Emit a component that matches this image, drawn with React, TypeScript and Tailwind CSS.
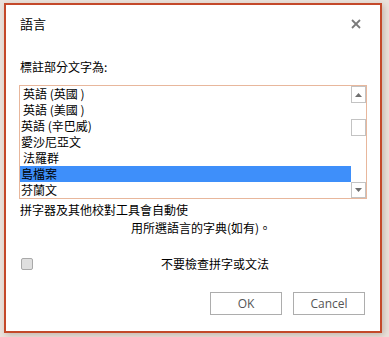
import React from "react";

const cjk = "font-['Noto_Sans_CJK_TC','Noto_Sans_CJK_SC',sans-serif]";

const items = [
  { label: "英語 (英國 )", indent: true },
  { label: "英語 (美國 )", indent: true },
  { label: "英語 (辛巴威)", indent: false },
  { label: "愛沙尼亞文", indent: false },
  { label: "法羅群", indent: true },
  { label: "島檔案", indent: false, selected: true },
  { label: "芬蘭文", indent: false },
];

export default function App() {
  return (
    <div className="w-[389px] h-[337px] bg-[#ebe2dc] pt-[3px] pl-[4px] overflow-hidden">
      <div
        className={`w-[378px] h-[330px] border-2 border-[#c4492a] bg-white flex flex-col pl-[13px] pr-[15px] text-black ${cjk} shadow-[2px_2px_6px_rgba(160,140,130,0.5)]`}
      >
        {/* Title bar */}
        <div className="flex items-center justify-between pt-[9px] h-[29px]">
          <span className="text-[13px] leading-[20px] pl-px">語言</span>
          <svg width="10" height="10" viewBox="0 0 10 10" className="mr-[4px]">
            <line x1="1" y1="1" x2="9" y2="9" stroke="#7a7a7a" strokeWidth="1.8" />
            <line x1="9" y1="1" x2="1" y2="9" stroke="#7a7a7a" strokeWidth="1.8" />
          </svg>
        </div>

        <div className="mt-[24px] text-[12px] leading-[18px] pl-px">標註部分文字為:</div>

        {/* Language list */}
        <div className="mt-[9px] w-[348px] h-[114px] border border-[#e8b79c] flex">
          <div className="flex-1 flex flex-col">
            {items.map((it) => (
              <div
                key={it.label}
                className={`h-[16px] text-[12px] leading-[16px] whitespace-pre ${
                  it.indent ? "pl-[3px]" : "pl-px"
                } ${it.selected ? "bg-[#3e8ffa]" : ""}`}
              >
                {it.label}
              </div>
            ))}
          </div>
          <div className="w-[15px] flex flex-col">
            <div className="h-[17px] border border-[#c3c3c3] flex items-center justify-center">
              <svg width="7" height="4" viewBox="0 0 7 4">
                <polygon points="0,4 7,4 3.5,0" fill="#6f6f6f" />
              </svg>
            </div>
            <div className="mt-[16px] h-[17px] border border-[#c3c3c3]" />
            <div className="flex-1" />
            <div className="h-[16px] border border-[#c3c3c3] flex items-center justify-center">
              <svg width="7" height="4" viewBox="0 0 7 4">
                <polygon points="0,0 7,0 3.5,4" fill="#6f6f6f" />
              </svg>
            </div>
          </div>
        </div>

        {/* Description */}
        <div className="mt-[2px] text-[12px] leading-[18px] pl-px">
          <div>拼字器及其他校對工具會自動使</div>
          <div className="pl-[111px]">用所選語言的字典(如有)。</div>
        </div>

        {/* Checkbox row */}
        <div className="mt-[18px] h-[18px] flex items-center">
          <div className="ml-[2px] w-[12px] h-[12px] rounded-[2px] border border-[#a9a9a9] bg-[#dfdfdf]" />
          <span className="ml-[128px] text-[12px] leading-[18px]">不要檢查拼字或文法</span>
        </div>

        {/* Buttons */}
        <div className="mt-[19px] flex justify-end gap-[11px] font-['Open_Sans',sans-serif] text-[12px] text-[#555]">
          <button className="w-[72px] h-[23px] border border-[#adadad] bg-white">OK</button>
          <button className="w-[72px] h-[23px] border border-[#adadad] bg-white">Cancel</button>
        </div>
      </div>
    </div>
  );
}
